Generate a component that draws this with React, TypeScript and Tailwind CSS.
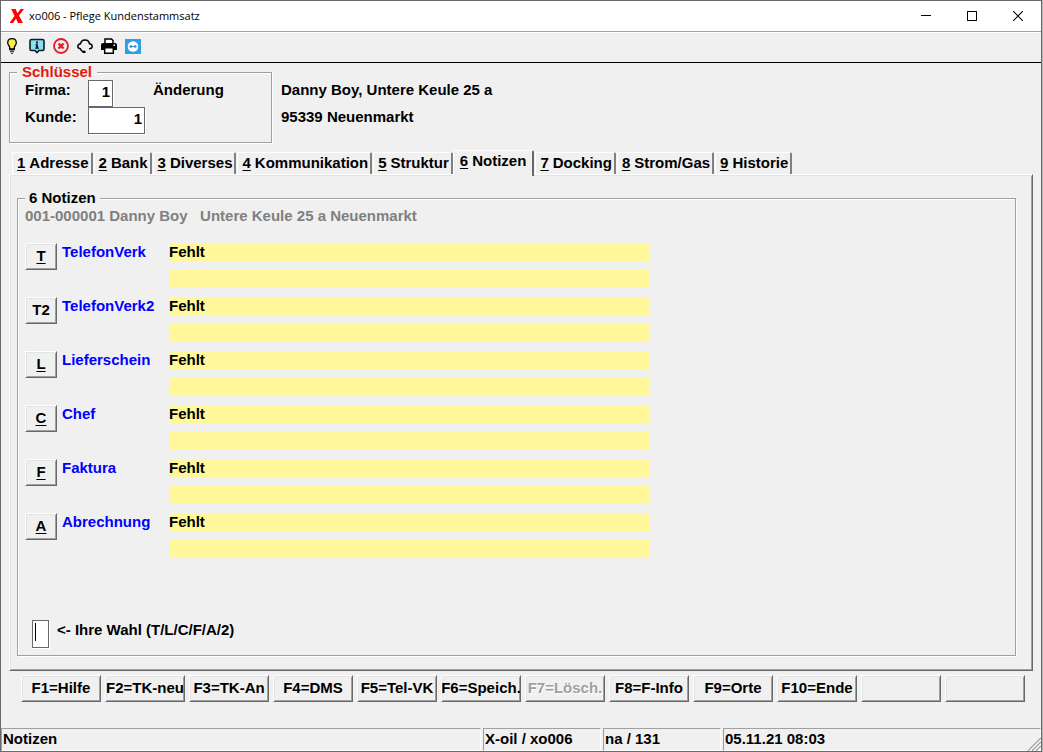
import { useState } from 'react';
import type { ReactNode } from 'react';

const RAISED =
  'border border-t-white border-l-white border-r-[#696969] border-b-[#696969] shadow-[inset_1px_1px_0_#e3e3e3,inset_-1px_-1px_0_#a0a0a0]';
const SUNKEN =
  'border border-[#696969] bg-white shadow-[1px_1px_0_#ffffff] outline-none';
const ETCHED =
  'relative border border-[#a0a0a0] shadow-[1px_1px_0_#ffffff,inset_1px_1px_0_#ffffff]';

const tabs = [
  { key: '1', label: 'Adresse' },
  { key: '2', label: 'Bank' },
  { key: '3', label: 'Diverses' },
  { key: '4', label: 'Kommunikation' },
  { key: '5', label: 'Struktur' },
  { key: '6', label: 'Notizen' },
  { key: '7', label: 'Docking' },
  { key: '8', label: 'Strom/Gas' },
  { key: '9', label: 'Historie' },
];

const notes = [
  { key: 'T', label: 'TelefonVerk', value: 'Fehlt' },
  { key: 'T2', label: 'TelefonVerk2', value: 'Fehlt' },
  { key: 'L', label: 'Lieferschein', value: 'Fehlt' },
  { key: 'C', label: 'Chef', value: 'Fehlt' },
  { key: 'F', label: 'Faktura', value: 'Fehlt' },
  { key: 'A', label: 'Abrechnung', value: 'Fehlt' },
];

const functionKeys = [
  'F1=Hilfe',
  'F2=TK-neu',
  'F3=TK-An',
  'F4=DMS',
  'F5=Tel-VK',
  'F6=Speich.',
  'F7=Lösch.',
  'F8=F-Info',
  'F9=Orte',
  'F10=Ende',
  '',
  '',
];

function ToolButton({ label, children }: { label: string; children: ReactNode }) {
  return (
    <button type="button" aria-label={label} className="h-4 w-4">
      <svg viewBox="0 0 16 16" width="16" height="16" fill="none">
        {children}
      </svg>
    </button>
  );
}

function TitleBar() {
  return (
    <header className="flex h-[31px] items-stretch border-b border-[#a0a0a0] bg-white">
      <div className="flex flex-1 items-center gap-1 pl-2">
        <svg viewBox="0 0 16 16" width="16" height="16" fill="#ff0000" aria-hidden="true">
          <path d="M2 1h4.600l1.900 4.200L11.600 1H15l-5 6.500 3.400 6.600L14 15H9L7 10.500l-3 4.500H0.500l5-6.900L3 2.500z" />
        </svg>
        <h1 className="font-['Open_Sans',sans-serif] text-[11px] font-normal">xo006 - Pflege Kundenstammsatz</h1>
      </div>
      <button type="button" aria-label="Minimieren" className="flex w-[46px] items-center justify-center">
        <svg viewBox="0 0 10 10" width="10" height="10" shapeRendering="crispEdges">
          <path d="M0 4h10v1H0z" fill="#000" />
        </svg>
      </button>
      <button type="button" aria-label="Maximieren" className="flex w-[46px] items-center justify-center">
        <svg viewBox="0 0 10 10" width="10" height="10" shapeRendering="crispEdges">
          <path d="M0.500 0.500h9v9h-9z" fill="none" stroke="#000" />
        </svg>
      </button>
      <button type="button" aria-label="Schließen" className="flex w-[46px] items-center justify-center">
        <svg viewBox="0 0 10 10" width="10" height="10">
          <path d="M0 0l10 10M10 0L0 10" fill="none" stroke="#000" strokeWidth="1.100" />
        </svg>
      </button>
    </header>
  );
}

function ToolBar() {
  return (
    <div className="flex h-[31px] items-center gap-2 border-t border-b border-t-white border-b-black pb-1 pl-1">
      <ToolButton label="Tipp">
        <path
          d="M7 0.700C4.300 0.700 2.700 2.600 2.700 4.800c0 2 1.300 2.800 1.900 4.200v2h4.800V9c.6-1.400 1.900-2.200 1.900-4.200C11.300 2.600 9.700.7 7 .7z"
          fill="#ffe94d"
          stroke="#000"
          strokeWidth="1.300"
        />
        <path d="M4.500 11h5v1.500h-5zM5 13.300h4v1H5zM6 15h2v.8H6z" fill="#111" />
      </ToolButton>
      <ToolButton label="Info">
        <path
          d="M2.500 1.500h11c.8 0 1.500.7 1.500 1.500v8c0 .8-.7 1.500-1.500 1.500H10l-2 2-2-2H2.500C1.700 12.500 1 11.800 1 11V3c0-.8.7-1.500 1.500-1.500z"
          fill="#8fdcf0"
          stroke="#06202b"
          strokeWidth="1.600"
        />
        <path d="M7 3.500h2v2H7zM6.500 6.200H9v3.300h1v1.300H6.300V9.500H7V7.500h-.5z" fill="#06202b" />
      </ToolButton>
      <ToolButton label="Abbrechen">
        <circle cx="8" cy="8" r="7" stroke="#e31b2b" strokeWidth="1.800" />
        <path d="M5.500 5.500l5 5M10.500 5.500l-5 5" stroke="#e31b2b" strokeWidth="2.400" />
      </ToolButton>
      <ToolButton label="Telefon">
        <path d="M3.500 6C3.800 3.200 5.300 1.900 8 1.900s4.200 1.300 4.500 4.100" stroke="#000" strokeWidth="1.500" />
        <path d="M3.700 5.800C1.700 6.200.8 7 .8 8.300s.9 2.300 2.900 2.700zM12.300 5.800c2 .4 2.900 1.200 2.900 2.500s-.9 2.300-2.900 2.700z" fill="#f0f0f0" />
        <path d="M4 5.800C1.700 6 .8 7 .8 8.300s.9 2.500 3.200 2.600M12 5.800c2.300.2 3.200 1.200 3.200 2.500s-.9 2.500-3.200 2.600" stroke="#000" strokeWidth="1.400" />
        <path d="M3.500 10.800c.3 1.600 1.200 2.600 2.700 3" stroke="#000" strokeWidth="1.400" />
        <path d="M5.500 12.700h3v2.300h-3z" fill="#000" />
      </ToolButton>
      <ToolButton label="Drucken">
        <path d="M4 5V1h6.500L12 2.500V5" fill="#fff" stroke="#000" strokeWidth="1.500" />
        <path d="M2 5h12c1.200 0 2 .8 2 2v5h-3v-2H3v2H0V7c0-1.200.8-2 2-2z" fill="#000" />
        <path d="M3.700 9.700h8.600v5.500H3.700z" fill="#fff" stroke="#000" strokeWidth="1.500" />
        <path d="M12.500 6.500h1.500V8h-1.500z" fill="#fff" />
      </ToolButton>
      <ToolButton label="TeamViewer">
        <path d="M0 1h16v15H0z" fill="#2f9fe3" />
        <circle cx="8" cy="8.500" r="5.300" fill="#fff" />
        <path d="M4 8.500l2.500-2v1.400h3V6.500l2.500 2-2.500 2V9.100h-3v1.400z" fill="#2f8fd3" />
      </ToolButton>
    </div>
  );
}

function CustomerKey() {
  return (
    <section className="flex px-2 pt-[9px]">
      <fieldset className={`${ETCHED} h-[71px] w-[263px] pt-[7px] pl-[15px]`}>
        <legend className="absolute -top-[9px] left-[7px] bg-[#f0f0f0] px-[5px] leading-4 text-[#e01b10]">Schlüssel</legend>
        <div className="grid grid-cols-[63px_65px_auto]">
          <label htmlFor="firma">Firma:</label>
          <input id="firma" defaultValue="1" className={`${SUNKEN} h-[27px] w-[25px] pr-0.5 pb-1 text-right`} />
          <span>Änderung</span>
          <label htmlFor="kunde">Kunde:</label>
          <input id="kunde" defaultValue="1" className={`${SUNKEN} h-[27px] w-[57px] pr-0.5 pb-1 text-right`} />
        </div>
      </fieldset>
      <address className="flex flex-col gap-[7px] pt-2 pl-[9px] not-italic">
        <span>Danny Boy, Untere Keule 25 a</span>
        <span>95339 Neuenmarkt</span>
      </address>
    </section>
  );
}

function TabStrip({ active, onSelect }: { active: string; onSelect: (key: string) => void }) {
  return (
    <div role="tablist" className="flex h-[31px] items-end gap-px pl-[11px]">
      {tabs.map((tab) => (
        <button
          key={tab.key}
          type="button"
          role="tab"
          aria-selected={tab.key === active}
          onClick={() => onSelect(tab.key)}
          className={
            tab.key === active
              ? 'relative z-10 -mb-0.5 -ml-px flex h-[26px] items-start gap-1 rounded-t-xs border-t border-r-2 border-l border-t-white border-r-[#696969] border-l-white bg-[#f0f0f0] px-1.5 whitespace-nowrap'
              : 'flex h-[22px] items-start gap-1 rounded-t-xs border-t border-r-2 border-l border-t-white border-r-[#808080] border-l-white pr-0.5 pl-1 whitespace-nowrap'
          }
        >
          <span className="underline underline-offset-2">{tab.key}</span>
          <span>{tab.label}</span>
        </button>
      ))}
    </div>
  );
}

function NoteRow({ note }: { note: (typeof notes)[number] }) {
  return (
    <div className="flex h-[54px] items-start">
      <button type="button" className={`${RAISED} h-[27px] w-8 pb-0.5 underline-offset-2 ${note.key === 'T2' ? '' : 'underline'}`}>
        {note.key}
      </button>
      <label htmlFor={`note-${note.key}`} className="-mt-px w-[112px] pl-[5px] text-[#0000ff]">
        {note.label}
      </label>
      <div className="flex w-[480px] flex-col gap-[9px]">
        <input id={`note-${note.key}`} readOnly value={note.value} className="h-[18px] bg-[#fff799] outline-none" />
        <input aria-label={`${note.label} Zeile 2`} readOnly value="" className="h-[18px] bg-[#fff799] outline-none" />
      </div>
    </div>
  );
}

function NotesPanel() {
  return (
    <main className={`${RAISED} mx-2 pt-[23px] pr-4 pb-3.5 pl-[7px]`}>
      <fieldset className={`${ETCHED} h-[458px] pt-[7px] pl-[7px]`}>
        <legend className="absolute -top-[9px] left-[7px] bg-[#f0f0f0] px-1 leading-4">6 Notizen</legend>
        <p className="whitespace-pre text-[#808080]">001-000001 Danny Boy   Untere Keule 25 a Neuenmarkt</p>
        <div className="mt-[17px]">
          {notes.map((note) => (
            <NoteRow key={note.key} note={note} />
          ))}
        </div>
        <div className="relative mt-[53px] flex items-start gap-2 pl-[7px]">
          <input id="wahl" className={`${SUNKEN} h-7 w-[17px]`} />
          <span className="absolute top-[3px] left-2.5 h-[18px] w-px bg-black" />
          <label htmlFor="wahl">{'<- Ihre Wahl (T/L/C/F/A/2)'}</label>
        </div>
      </fieldset>
    </main>
  );
}

function FunctionKeys() {
  return (
    <div className="flex gap-1 pt-1 pr-4 pl-5">
      {functionKeys.map((label, i) => {
        const disabled = label === 'F7=Lösch.';
        return (
          <button
            key={i}
            type="button"
            disabled={disabled}
            aria-label={label || 'nicht belegt'}
            className={`${RAISED} flex h-[27px] min-w-0 flex-1 items-center justify-center overflow-hidden pb-0.5 whitespace-nowrap ${
              disabled ? 'text-[#a0a0a0] [text-shadow:1px_1px_0_#ffffff]' : ''
            }`}
          >
            {label}
          </button>
        );
      })}
    </div>
  );
}

function StatusBar() {
  const cell = 'h-[23px] border border-t-[#a0a0a0] border-l-[#a0a0a0] border-r-white border-b-white pl-px';
  return (
    <footer className="relative mt-auto grid grid-cols-[1fr_118px_118px_318px] gap-0.5">
      <div className={cell}>Notizen</div>
      <div className={cell}>X-oil / xo006</div>
      <div className={cell}>na / 131</div>
      <div className={cell}>05.11.21 08:03</div>
      <svg viewBox="0 0 14 14" width="14" height="14" className="absolute right-0 bottom-0" aria-hidden="true">
        <path d="M1 14L14 1M5 14l9-9M9 14l5-5" stroke="#a0a0a0" strokeWidth="1.500" />
        <path d="M2.500 14L14 2.500M6.500 14L14 6.500M10.500 14l3.500-3.500" stroke="#fff" />
      </svg>
    </footer>
  );
}

export default function App() {
  const [activeTab, setActiveTab] = useState('6');

  return (
    <div className="bg-[#b8b8b8] pr-px">
      <div className="flex min-h-screen flex-col border border-[#696969] bg-[#f0f0f0] font-['Liberation_Sans',Arial,sans-serif] text-[15px] leading-5 font-bold text-black">
        <TitleBar />
        <ToolBar />
        <CustomerKey />
        <TabStrip active={activeTab} onSelect={setActiveTab} />
        <NotesPanel />
        <FunctionKeys />
        <StatusBar />
      </div>
    </div>
  );
}
